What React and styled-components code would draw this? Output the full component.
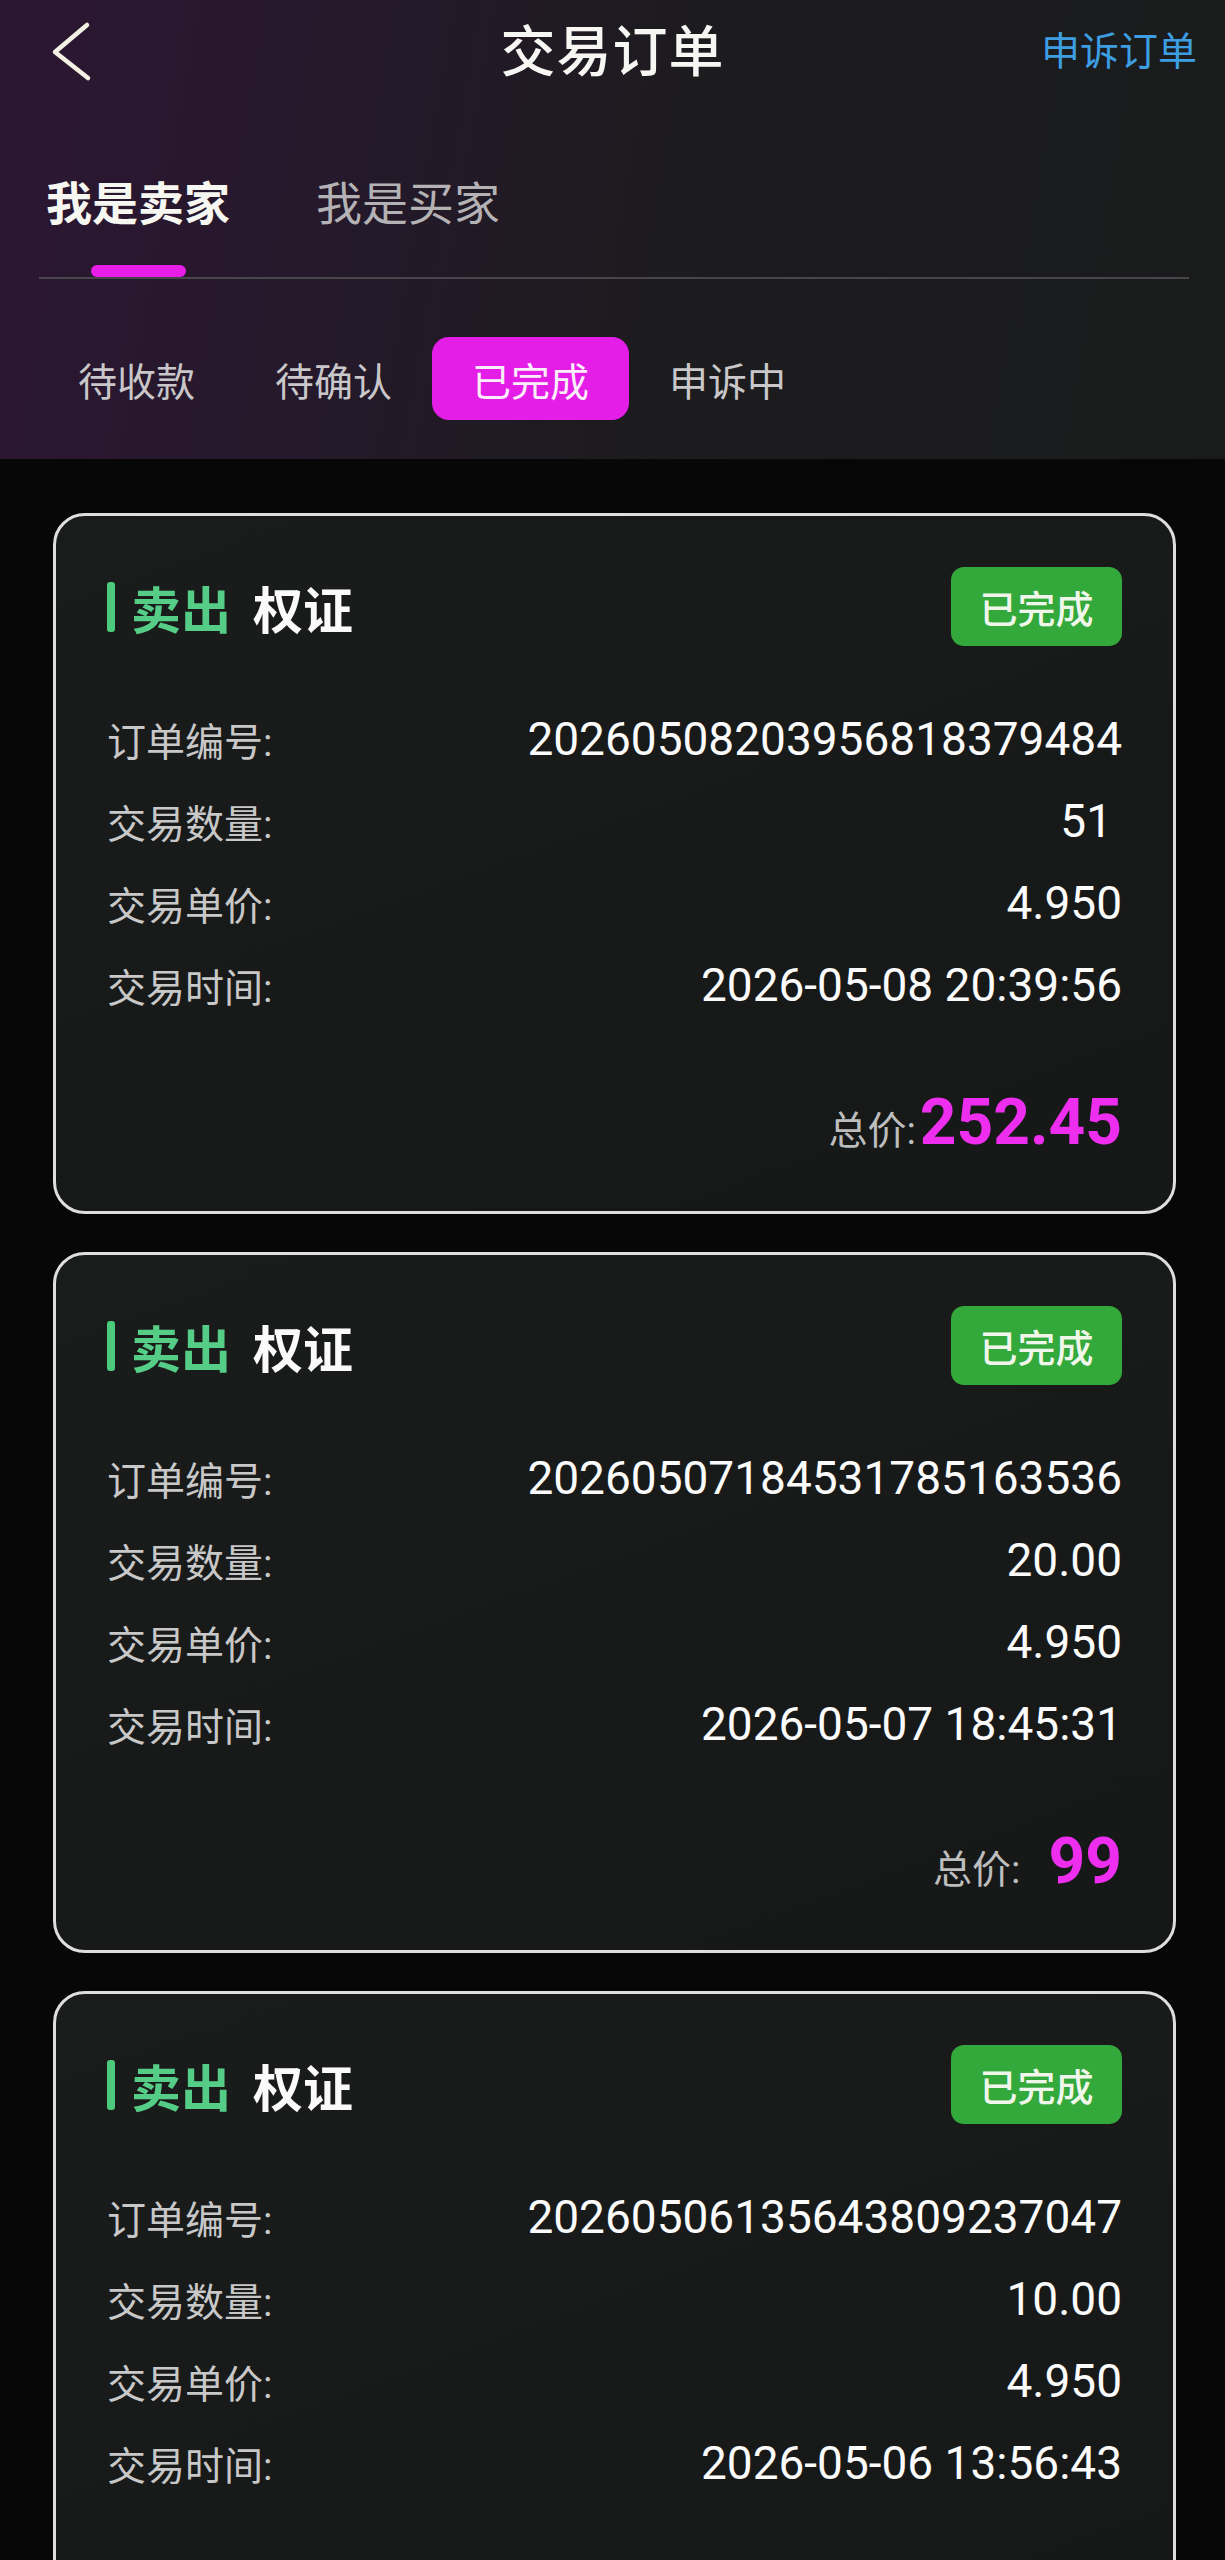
import React from "react";
import styled, { createGlobalStyle } from "styled-components";

const GlobalStyle = createGlobalStyle`
  html, body {
    margin: 0;
    padding: 0;
    background: #070707;
  }
  body {
    font-family: Roboto, "Noto Sans CJK SC", sans-serif;
    -webkit-font-smoothing: antialiased;
  }
  * { box-sizing: border-box; }
`;

const Page = styled.div`
  width: 1225px;
  min-height: 2560px;
  background: #070707;
`;

const Header = styled.header`
  background: linear-gradient(100deg, #2c1632 0%, #25192b 28%, #1c1b1e 55%, #1a1c1c 100%);
  padding-bottom: 39px;
`;

const NavBar = styled.div`
  height: 104px;
  display: grid;
  grid-template-columns: 1fr auto 1fr;
  align-items: center;
`;

const BackButton = styled.button`
  justify-self: start;
  background: none;
  border: 0;
  padding: 0 0 0 50px;
  height: 64px;
  display: flex;
  align-items: center;
  cursor: pointer;
`;

const Title = styled.h1`
  margin: 0;
  font-size: 55px;
  font-weight: 500;
  color: #f6f6f2;
  line-height: 1;
  letter-spacing: 1px;
`;

const AppealLink = styled.a`
  justify-self: end;
  padding-right: 28px;
  font-size: 39px;
  color: #3d9ee2;
  text-decoration: none;
  line-height: 1;
`;

const RoleBar = styled.div`
  margin: 0 36px 0 39px;
  padding-left: 7px;
  display: flex;
  gap: 86px;
  border-bottom: 2px solid #48464b;
`;

const RoleTab = styled.div`
  display: flex;
  flex-direction: column;
  align-items: center;
  padding-top: 70px;
`;

const RoleLabel = styled.span`
  font-size: 46px;
  line-height: 60px;
  font-weight: ${(p) => (p.$active ? 700 : 400)};
  color: ${(p) => (p.$active ? "#f7f7f2" : "#b4b2b4")};
`;

const RoleIndicator = styled.span`
  margin-top: 31px;
  width: 95px;
  height: 12px;
  border-radius: 6px;
  background: ${(p) => (p.$active ? "#e81ee8" : "transparent")};
`;

const StatusBar = styled.div`
  margin-top: 58px;
  padding-left: 38px;
  display: flex;
`;

const StatusTab = styled.div`
  width: 197px;
  height: 83px;
  border-radius: 17px;
  display: flex;
  align-items: center;
  justify-content: center;
  font-size: 39px;
  color: ${(p) => (p.$active ? "#fbeefb" : "#c9c7c9")};
  background: ${(p) => (p.$active ? "#e41ee6" : "transparent")};
`;

const List = styled.main`
  padding: 54px 49px 0 53px;
  display: flex;
  flex-direction: column;
  gap: 38px;
`;

const Card = styled.section`
  border: 3px solid #dedede;
  border-radius: 32px;
  background: linear-gradient(160deg, #1a1c1c 0%, #161818 100%);
  padding: 51px 51px 48px 51px;
`;

const CardHead = styled.div`
  height: 79px;
  display: flex;
  align-items: center;
  justify-content: space-between;
`;

const TradeTitle = styled.div`
  display: flex;
  align-items: center;
`;

const SideMark = styled.span`
  width: 8px;
  height: 50px;
  border-radius: 3px;
  background: #4ccb7c;
  margin-right: 16px;
`;

const SideText = styled.span`
  font-size: 50px;
  font-weight: 700;
  color: #56cd86;
`;

const AssetText = styled.span`
  font-size: 50px;
  font-weight: 700;
  color: #fafafa;
  margin-left: 22px;
`;

const StatusBadge = styled.span`
  width: 171px;
  height: 79px;
  border-radius: 13px;
  background: #33a83b;
  color: #f1f6ea;
  font-size: 38px;
  font-weight: 500;
  display: flex;
  align-items: center;
  justify-content: center;
`;

const Rows = styled.div`
  margin-top: 52px;
`;

const Row = styled.div`
  height: 82px;
  display: flex;
  align-items: center;
  justify-content: space-between;
`;

const RowLabel = styled.span`
  font-size: 39px;
  color: #c8c8c8;
`;

const RowValue = styled.span`
  font-size: 46px;
  color: #fbfbfb;
  padding-right: ${(p) => (p.$trail ? "10px" : "0")};
`;

const TotalRow = styled.div`
  margin-top: 57px;
  height: 80px;
  display: flex;
  align-items: baseline;
  justify-content: flex-end;
`;

const TotalLabel = styled.span`
  font-size: 39px;
  color: #bdbdbd;
  margin-right: ${(p) => p.$gap}px;
`;

const TotalAmount = styled.span`
  font-size: 64px;
  font-weight: 700;
  color: #ee2eee;
  line-height: 80px;
`;

const orders = [
  {
    no: "20260508203956818379484",
    qty: "51",
    trail: true,
    price: "4.950",
    time: "2026-05-08 20:39:56",
    total: "252.45",
    gap: 4,
  },
  {
    no: "20260507184531785163536",
    qty: "20.00",
    price: "4.950",
    time: "2026-05-07 18:45:31",
    total: "99",
    gap: 28,
  },
  {
    no: "20260506135643809237047",
    qty: "10.00",
    price: "4.950",
    time: "2026-05-06 13:56:43",
    total: "49.5",
    gap: 28,
  },
];

function BackIcon() {
  return (
    <svg width="44" height="64" viewBox="0 0 44 64" fill="none">
      <path
        d="M37 5 L5 32 L38 58"
        stroke="#f3f1e4"
        strokeWidth="4.5"
        strokeLinecap="round"
        strokeLinejoin="round"
      />
    </svg>
  );
}

function OrderCard({ o }) {
  return (
    <Card>
      <CardHead>
        <TradeTitle>
          <SideMark />
          <SideText>卖出</SideText>
          <AssetText>权证</AssetText>
        </TradeTitle>
        <StatusBadge>已完成</StatusBadge>
      </CardHead>
      <Rows>
        <Row>
          <RowLabel>订单编号:</RowLabel>
          <RowValue>{o.no}</RowValue>
        </Row>
        <Row>
          <RowLabel>交易数量:</RowLabel>
          <RowValue $trail={o.trail}>{o.qty}</RowValue>
        </Row>
        <Row>
          <RowLabel>交易单价:</RowLabel>
          <RowValue>{o.price}</RowValue>
        </Row>
        <Row>
          <RowLabel>交易时间:</RowLabel>
          <RowValue>{o.time}</RowValue>
        </Row>
      </Rows>
      <TotalRow>
        <TotalLabel $gap={o.gap}>总价:</TotalLabel>
        <TotalAmount>{o.total}</TotalAmount>
      </TotalRow>
    </Card>
  );
}

export default function App() {
  const statuses = ["待收款", "待确认", "已完成", "申诉中"];
  return (
    <Page>
      <GlobalStyle />
      <Header>
        <NavBar>
          <BackButton aria-label="返回">
            <BackIcon />
          </BackButton>
          <Title>交易订单</Title>
          <AppealLink href="#">申诉订单</AppealLink>
        </NavBar>
        <RoleBar>
          <RoleTab>
            <RoleLabel $active>我是卖家</RoleLabel>
            <RoleIndicator $active />
          </RoleTab>
          <RoleTab>
            <RoleLabel>我是买家</RoleLabel>
            <RoleIndicator />
          </RoleTab>
        </RoleBar>
        <StatusBar>
          {statuses.map((s) => (
            <StatusTab key={s} $active={s === "已完成"}>
              {s}
            </StatusTab>
          ))}
        </StatusBar>
      </Header>
      <List>
        {orders.map((o) => (
          <OrderCard key={o.no} o={o} />
        ))}
      </List>
    </Page>
  );
}
